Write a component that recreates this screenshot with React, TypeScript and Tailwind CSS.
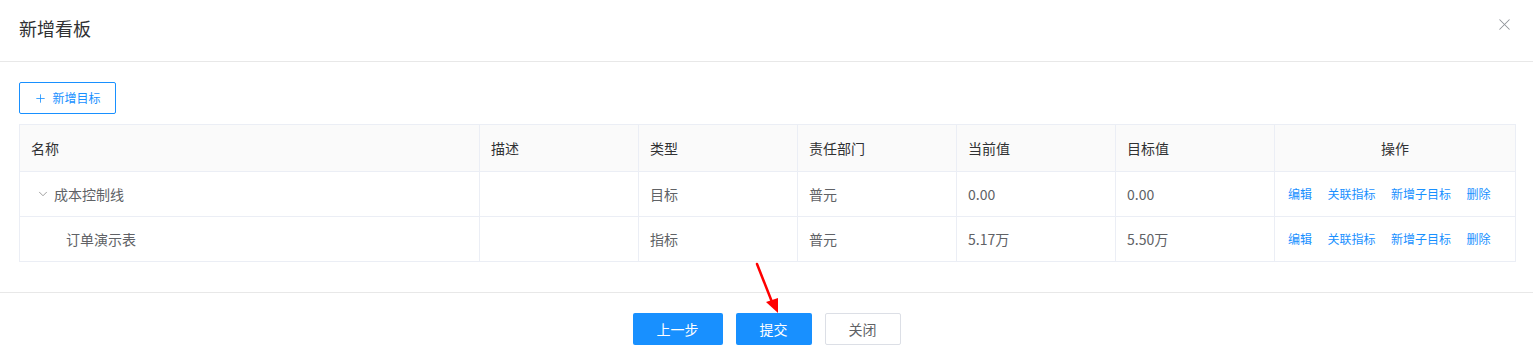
import React from 'react';
import { ChevronDown, Plus, X } from 'lucide-react';

const font = { fontFamily: '"Noto Sans CJK SC", "Noto Sans", sans-serif' };

interface Row {
  name: string;
  level: number;
  expandable: boolean;
  type: string;
  dept: string;
  current: string;
  target: string;
}

const rows: Row[] = [
  { name: '成本控制线', level: 0, expandable: true, type: '目标', dept: '普元', current: '0.00', target: '0.00' },
  { name: '订单演示表', level: 1, expandable: false, type: '指标', dept: '普元', current: '5.17万', target: '5.50万' },
];

const actions = ['编辑', '关联指标', '新增子目标', '删除'];

export default function App() {
  return (
    <div className="relative w-[1533px] h-[362px] bg-white text-[#606266] overflow-hidden" style={font}>
      {/* Header */}
      <div className="h-[62px] border-b border-[#e8e8e8] flex items-start justify-between pl-[19px] pr-[19px] pt-[16px]">
        <span className="text-[18px] leading-[24px] text-[#303133]">新增看板</span>
        <button className="mt-[-1px] text-[#909399]">
          <X size={19} strokeWidth={1.3} />
        </button>
      </div>

      {/* Body */}
      <div className="px-[19px] pt-[20px] pb-[30px]">
        <button className="h-[32px] w-[97px] border border-[#1890ff] rounded-[2px] flex items-center justify-center gap-[5px] text-[#1890ff] text-[12px]">
          <Plus size={13} strokeWidth={1.5} />
          <span>新增目标</span>
        </button>

        <table className="mt-[10px] w-[1496px] table-fixed border-collapse text-[14px]">
          <colgroup>
            <col className="w-[460px]" />
            <col className="w-[159px]" />
            <col className="w-[159px]" />
            <col className="w-[159px]" />
            <col className="w-[159px]" />
            <col className="w-[159px]" />
            <col className="w-[241px]" />
          </colgroup>
          <thead>
            <tr className="h-[47px] bg-[#fafafa] text-[#303133]">
              {['名称', '描述', '类型', '责任部门', '当前值', '目标值'].map((h) => (
                <th key={h} className="border border-[#ebeef5] text-left font-normal px-[11px]">
                  {h}
                </th>
              ))}
              <th className="border border-[#ebeef5] text-center font-normal">操作</th>
            </tr>
          </thead>
          <tbody>
            {rows.map((r) => (
              <tr key={r.name} className="h-[45px]">
                <td className="border border-[#ebeef5] px-[11px]">
                  <div className={`flex items-center ${r.level === 1 ? 'pl-[35px]' : 'pl-[5px]'}`}>
                    {r.expandable && <ChevronDown size={14} strokeWidth={1.2} className="text-[#777] mr-[4px]" />}
                    <span>{r.name}</span>
                  </div>
                </td>
                <td className="border border-[#ebeef5] px-[11px]" />
                <td className="border border-[#ebeef5] px-[11px]">{r.type}</td>
                <td className="border border-[#ebeef5] px-[11px]">{r.dept}</td>
                <td className="border border-[#ebeef5] px-[11px]">{r.current}</td>
                <td className="border border-[#ebeef5] px-[11px]">{r.target}</td>
                <td className="border border-[#ebeef5] pl-[13px]">
                  <div className="flex items-center gap-[15.5px] text-[12px] text-[#1890ff]">
                    {actions.map((a) => (
                      <span key={a}>{a}</span>
                    ))}
                  </div>
                </td>
              </tr>
            ))}
          </tbody>
        </table>
      </div>

      {/* Footer */}
      <div className="border-t border-[#e8e8e8] pt-[20px] flex justify-center gap-[13px] text-[14px]">
        <button className="h-[32px] w-[90px] rounded-[2px] bg-[#1890ff] text-white">上一步</button>
        <button className="h-[32px] w-[76px] rounded-[2px] bg-[#1890ff] text-white">提交</button>
        <button className="h-[32px] w-[76px] rounded-[2px] border border-[#dcdfe6] text-[#606266]">关闭</button>
      </div>

      {/* Annotation arrow */}
      <svg className="absolute left-[745px] top-[258px] pointer-events-none" width="45" height="60" viewBox="0 0 45 60">
        <line x1="12" y1="6" x2="27" y2="44" stroke="#ff0000" strokeWidth="2.5" strokeLinecap="round" />
        <polygon points="21,44 33,55 33,40" fill="#ff0000" />
      </svg>
    </div>
  );
}
